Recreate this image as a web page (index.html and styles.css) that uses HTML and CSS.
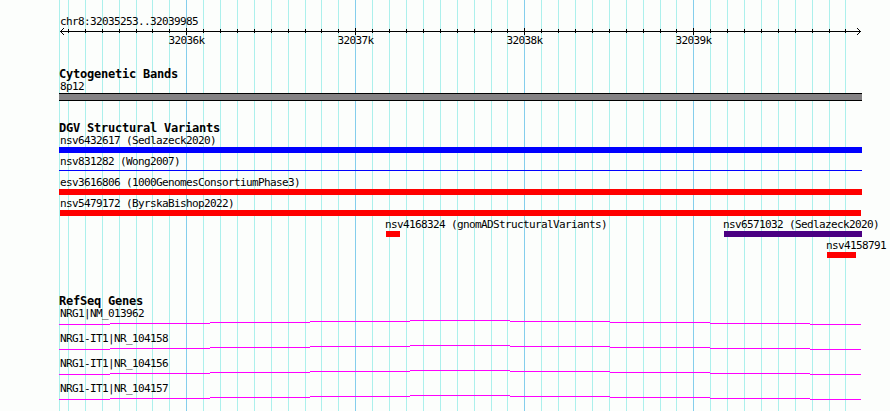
FILE: index.html
```
<!DOCTYPE html>
<html lang="en">
<head>
<meta charset="UTF-8">
<meta name="viewport" content="width=device-width, initial-scale=1.0">
<title>chr8:32035253..32039985</title>
<link rel="stylesheet" href="styles.css">
</head>
<body>

  <div class="browser">
    <svg class="grid" width="890" height="411" shape-rendering="crispEdges">
      <path class="minor" d="M59.5 0v411M68.5 0v411M85.5 0v411M102.5 0v411M119.5 0v411M136.5 0v411M152.5 0v411M169.5 0v411M203.5 0v411M220.5 0v411M237.5 0v411M254.5 0v411M271.5 0v411M288.5 0v411M305.5 0v411M321.5 0v411M338.5 0v411M372.5 0v411M389.5 0v411M406.5 0v411M423.5 0v411M440.5 0v411M457.5 0v411M474.5 0v411M491.5 0v411M507.5 0v411M541.5 0v411M558.5 0v411M575.5 0v411M592.5 0v411M609.5 0v411M626.5 0v411M643.5 0v411M660.5 0v411M676.5 0v411M710.5 0v411M727.5 0v411M744.5 0v411M761.5 0v411M778.5 0v411M795.5 0v411M812.5 0v411M829.5 0v411M845.5 0v411"/>
      <path class="major" d="M186.5 0v411M355.5 0v411M524.5 0v411M693.5 0v411"/>
    </svg>

    <main class="tracks">
      <header class="scale">
        <div class="label">chr8:32035253..32039985</div>
        <svg class="axis" width="803" height="7" viewBox="59 28 803 7" shape-rendering="crispEdges">
          <path d="M60 31.5H861"/>
          <path d="M68.5 29v4M85.5 29v4M102.5 29v4M119.5 29v4M136.5 29v4M152.5 29v4M169.5 29v4M203.5 29v4M220.5 29v4M237.5 29v4M254.5 29v4M271.5 29v4M288.5 29v4M305.5 29v4M321.5 29v4M338.5 29v4M372.5 29v4M389.5 29v4M406.5 29v4M423.5 29v4M440.5 29v4M457.5 29v4M474.5 29v4M491.5 29v4M507.5 29v4M541.5 29v4M558.5 29v4M575.5 29v4M592.5 29v4M609.5 29v4M626.5 29v4M643.5 29v4M660.5 29v4M676.5 29v4M710.5 29v4M727.5 29v4M744.5 29v4M761.5 29v4M778.5 29v4M795.5 29v4M812.5 29v4M829.5 29v4M845.5 29v4"/>
          <path d="M186.5 28v7M355.5 28v7M524.5 28v7M693.5 28v7"/>
          <!-- arrow heads -->
          <path d="M63.5 28v1M62.5 29v1M61.5 30v1M61.5 32v1M62.5 33v1M63.5 34v1M857.5 28v1M858.5 29v1M859.5 30v1M859.5 32v1M858.5 33v1M857.5 34v1"/>
        </svg>
        <div class="ticks">
          <span>32036k</span>
          <span>32037k</span>
          <span>32038k</span>
          <span>32039k</span>
        </div>
      </header>

      <section class="track cyto">
        <h2>Cytogenetic Bands</h2>
        <div class="label">8p12</div>
        <div class="band"></div>
      </section>

      <section class="track variants">
        <h2>DGV Structural Variants</h2>
        <div class="row">
          <div class="feature full">
            <div class="label">nsv6432617 (Sedlazeck2020)</div>
            <div class="bar blue"></div>
          </div>
        </div>
        <div class="row">
          <div class="feature full">
            <div class="label">nsv831282 (Wong2007)</div>
            <div class="bar blue thin"></div>
          </div>
        </div>
        <div class="row">
          <div class="feature full">
            <div class="label">esv3616806 (1000GenomesConsortiumPhase3)</div>
            <div class="bar red"></div>
          </div>
        </div>
        <div class="row">
          <div class="feature full">
            <div class="label">nsv5479172 (ByrskaBishop2022)</div>
            <div class="bar red inset"></div>
          </div>
        </div>
        <div class="row">
          <div class="feature gnomad">
            <div class="label">nsv4168324 (gnomADStructuralVariants)</div>
            <div class="bar red"></div>
          </div>
          <div class="feature sedlazeck">
            <div class="label">nsv6571032 (Sedlazeck2020)</div>
            <div class="bar indigo"></div>
          </div>
        </div>
        <div class="row">
          <div class="feature last">
            <div class="label">nsv4158791</div>
            <div class="bar red"></div>
          </div>
        </div>
      </section>

      <section class="track genes">
        <h2>RefSeq Genes</h2>
        <div class="gene">
          <div class="label">NRG1|NM_013962</div>
          <svg width="803" height="5" shape-rendering="crispEdges"><path d="M0 4.5H51M51 3.5H151M151 2.5H251M251 1.5H351M351 .5H451M451 1.5H551M551 2.5H651M651 3.5H751M751 4.5H802"/></svg>
        </div>
        <div class="gene">
          <div class="label">NRG1-IT1|NR_104158</div>
          <svg width="803" height="5" shape-rendering="crispEdges"><path d="M0 4.5H51M51 3.5H151M151 2.5H251M251 1.5H351M351 .5H451M451 1.5H551M551 2.5H651M651 3.5H751M751 4.5H802"/></svg>
        </div>
        <div class="gene">
          <div class="label">NRG1-IT1|NR_104156</div>
          <svg width="803" height="5" shape-rendering="crispEdges"><path d="M0 4.5H51M51 3.5H151M151 2.5H251M251 1.5H351M351 .5H451M451 1.5H551M551 2.5H651M651 3.5H751M751 4.5H802"/></svg>
        </div>
        <div class="gene">
          <div class="label">NRG1-IT1|NR_104157</div>
          <svg width="803" height="5" shape-rendering="crispEdges"><path d="M0 4.5H51M51 3.5H151M151 2.5H251M251 1.5H351M351 .5H451M451 1.5H551M551 2.5H651M651 3.5H751M751 4.5H802"/></svg>
        </div>
      </section>
    </main>
  </div>

</body>
</html>
```

FILE: styles.css
```
body {
  margin: 0;
  background: #fcfefc;
  color: #000;
  font-family: "DejaVu Sans Mono", monospace;
  font-size: 11px;
  line-height: 14px;
  letter-spacing: -0.622px;
}

.browser {
  position: relative;
  width: 890px;
  height: 411px;
  overflow: hidden;
}

/* grid lines run behind every track */
.grid {
  position: absolute;
  top: 0;
  left: 0;
}

.grid path, .axis path, .gene path {
  fill: none;
  stroke-width: 1;
}

.grid .minor {
  stroke: #acf0ec;
}

.grid .major {
  stroke: #84ceec;
}

.tracks {
  position: relative;
  width: 803px;
  padding: 15px 0 0 59px;
}

svg {
  display: block;
}

.label {
  height: 12px;
  padding-left: 1px;
  white-space: nowrap;
}

/* scale */
.axis {
  margin: 1px 0 -1px;
}

.axis path {
  stroke: #000;
}

.ticks {
  display: grid;
  grid-template-columns: repeat(4, 169px);
  height: 12px;
  margin-left: 43px;
}

.ticks span {
  text-align: center;
}

/* tracks */
.track h2 {
  margin: 0;
  font-size: 12px;
  line-height: 12px;
  letter-spacing: -0.224px;
}

.cyto {
  margin-top: 22px;
}

.band {
  height: 6px;
  margin-top: 1px;
  border-top: 1px solid #000;
  border-bottom: 1px solid #000;
  background: #848284;
}

.variants {
  margin-top: 21px;
}

.row {
  display: flex;
  height: 21px;
}

.bar {
  height: 6px;
  margin-top: 1px;
}

.blue {
  background: #0000ff;
}

.red {
  background: #ff0000;
}

.indigo {
  background: #4b0082;
}

.thin {
  height: 1px;
  margin-top: 3px;
}

.inset {
  margin-left: 1px;
  margin-right: 1px;
}

.full {
  width: 803px;
}

.gnomad {
  width: 14px;
  margin-left: 327px;
}

.sedlazeck {
  width: 138px;
  margin-left: 324px;
}

.last {
  width: 29px;
  margin-left: 768px;
}

.gnomad .label, .sedlazeck .label, .last .label {
  margin-left: -2px;
}

/* genes */
.genes {
  margin-top: 35px;
}

.gene {
  height: 25px;
}

.gene svg {
  margin-top: 1px;
}

.gene path {
  stroke: #ff00ff;
}
```
